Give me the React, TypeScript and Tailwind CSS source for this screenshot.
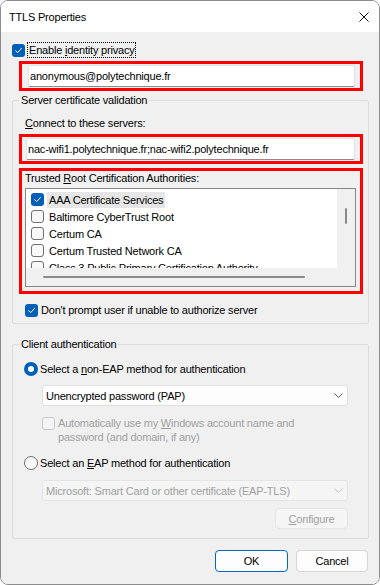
import { type ReactNode } from "react";

function CheckBox({ checked = false, disabled = false }: { checked?: boolean; disabled?: boolean }) {
  if (checked)
    return (
      <span className="flex h-[13px] w-[13px] shrink-0 items-center justify-center rounded-[3px] bg-[#005fb8]">
        <svg width="9" height="9" viewBox="0 0 9 9" fill="none">
          <path d="M1.6 4.7 L3.7 6.6 L7.5 2.4" stroke="white" strokeWidth="1" strokeLinecap="round" strokeLinejoin="round" />
        </svg>
      </span>
    );
  return (
    <span
      className={
        disabled
          ? "block h-[13px] w-[13px] shrink-0 rounded-[3px] border border-[#c8c8c8] bg-[#f5f5f5]"
          : "block h-[13px] w-[13px] shrink-0 rounded-[3px] border border-[#707070] bg-[#f8f8f8]"
      }
    />
  );
}

function Radio({ checked = false }: { checked?: boolean }) {
  return checked ? (
    <span className="flex h-[14px] w-[14px] shrink-0 items-center justify-center rounded-full bg-[#005fb8]">
      <span className="h-[6px] w-[6px] rounded-full bg-white" />
    </span>
  ) : (
    <span className="block h-[14px] w-[14px] shrink-0 rounded-full border border-[#707070] bg-[#f8f8f8]" />
  );
}

function Chevron({ color }: { color: string }) {
  return (
    <svg width="9" height="5" viewBox="0 0 9 5" fill="none">
      <path d="M0.5 0.5 L4.5 4.5 L8.5 0.5" stroke={color} strokeWidth="1" />
    </svg>
  );
}

// the red annotation frames drawn over the dialog
function RedBox({ className, children }: { className: string; children: ReactNode }) {
  return <div className={`w-[344px] border-[3px] border-[#ff0000] ${className}`}>{children}</div>;
}

const certs = [
  "AAA Certificate Services",
  "Baltimore CyberTrust Root",
  "Certum CA",
  "Certum Trusted Network CA",
  "Class 3 Public Primary Certification Authority",
];

export default function App() {
  return (
    <div className="flex h-[585px] w-[380px] flex-col overflow-hidden rounded-[8px] border border-[#8c8c8c] bg-white font-['Liberation_Sans',Arial,sans-serif] text-[11px] leading-[14px] tracking-[-0.2px] text-black">
      {/* title bar */}
      <div className="flex h-[31px] shrink-0 items-center justify-between bg-white pl-[8px] pr-[10px]">
        <span>TTLS Properties</span>
        <svg width="10" height="10" viewBox="0 0 10 10">
          <path d="M0.5 0.5 L9.5 9.5 M9.5 0.5 L0.5 9.5" stroke="#111" strokeWidth="1" />
        </svg>
      </div>

      <div className="flex flex-1 flex-col bg-[#f0f0f0]">
        <div className="ml-[11px] mt-[10px] flex h-[16px] items-center gap-[2px]">
          <CheckBox checked />
          <span className="border border-dotted border-black px-[1px] leading-[14px]">
            Enable <u>i</u>dentity privacy
          </span>
        </div>

        <RedBox className="ml-[18px] mt-[3px] h-[30px] pl-[6px] pt-[1px]">
          <div className="flex h-[22px] w-[327px] items-center rounded-[2px] border border-[#e2e2e2] border-b-[#8d8d8d] bg-white pl-[1px]">
            anonymous@polytechnique.fr
          </div>
        </RedBox>

        <fieldset className="ml-[11px] mt-[2px] w-[357px] rounded-[2px] border border-[#dcdcdc]">
          <legend className="ml-[6px] px-[2px] leading-[14px]">Server certificate validation</legend>
          <div className="ml-[12px] mt-[9px]">
            <u>C</u>onnect to these servers:
          </div>
          <RedBox className="ml-[6px] mt-[4px] h-[30px] pl-[4px] pt-[1px]">
            <div className="flex h-[22px] w-[329px] items-center rounded-[2px] border border-[#e2e2e2] border-b-[#8d8d8d] bg-white pl-[1px]">
              nac-wifi1.polytechnique.fr;nac-wifi2.polytechnique.fr
            </div>
          </RedBox>
          <RedBox className="ml-[6px] mt-[4px] h-[126px] pl-[3px]">
            <div>
              Trusted <u>R</u>oot Certification Authorities:
            </div>
            <div className="mt-[3px] grid h-[99px] w-[331px] grid-cols-[311px_18px] grid-rows-[79px_18px] border border-[#868686] bg-white">
              <div className="overflow-hidden pt-[2px]">
                {certs.map((c, i) => (
                  <div key={c} className="flex h-[17px] items-center whitespace-nowrap pl-[5px]">
                    <CheckBox checked={i === 0} />
                    <span className={i === 0 ? "ml-[3px] h-[16px] bg-[#e6e6e6] px-[2px] leading-[16px]" : "ml-[3px] h-[16px] px-[2px] leading-[16px]"}>
                      {c}
                    </span>
                  </div>
                ))}
              </div>
              <div className="flex justify-center bg-[#f0f0f0] pt-[19px]">
                <span className="h-[16px] w-[2px] rounded-full bg-[#8a8a8a]" />
              </div>
              <div className="flex items-center bg-[#f0f0f0] pl-[17px]">
                <span className="h-[2px] w-[262px] rounded-full bg-[#8a8a8a]" />
              </div>
              <div className="bg-[#f0f0f0]" />
            </div>
          </RedBox>
          <div className="mb-[5px] ml-[12px] mt-[8px] flex h-[16px] items-center gap-[3px]">
            <CheckBox checked />
            <span>Don't prompt user if unable to authorize server</span>
          </div>
        </fieldset>

        <fieldset className="ml-[11px] mt-[13px] w-[357px] rounded-[2px] border border-[#dcdcdc]">
          <legend className="ml-[6px] px-[2px] leading-[14px]">Client authentication</legend>
          <div className="ml-[11px] mt-[10px] flex h-[16px] items-center gap-[2px]">
            <Radio checked />
            <span>
              Select a <u>n</u>on-EAP method for authentication
            </span>
          </div>
          <div className="ml-[29px] mt-[8px] flex h-[21px] w-[306px] items-center justify-between rounded-[3px] border border-[#e0e0e0] bg-[#fdfdfd] pl-[3px] pr-[4px]">
            <span>Unencrypted password (PAP)</span>
            <Chevron color="#5c5c5c" />
          </div>
          <div className="ml-[29px] mt-[10px] flex items-start gap-[3px] text-[#a0a0a0]">
            <span className="mt-[1px]">
              <CheckBox disabled />
            </span>
            <span>
              Automatically use my <u>W</u>indows account name and
              <br />
              password (and domain, if any)
            </span>
          </div>
          <div className="ml-[11px] mt-[11px] flex h-[16px] items-center gap-[2px]">
            <Radio />
            <span>
              Select an <u>E</u>AP method for authentication
            </span>
          </div>
          <div className="ml-[29px] mt-[9px] flex h-[21px] w-[306px] items-center justify-between rounded-[3px] border border-[#e5e5e5] bg-[#f5f5f5] pl-[3px] pr-[4px] text-[#a0a0a0]">
            <span>Microsoft: Smart Card or other certificate (EAP-TLS)</span>
            <Chevron color="#c4c4c4" />
          </div>
          <div className="mb-[9px] ml-[262px] mt-[7px] flex h-[21px] w-[73px] items-center justify-center rounded-[4px] border border-[#e5e5e5] bg-[#f5f5f5] text-[#a0a0a0]">
            <span>
              <u>C</u>onfigure
            </span>
          </div>
        </fieldset>

        <div className="mt-[11px] flex justify-end gap-[8px] pr-[11px]">
          <button className="h-[22px] w-[73px] rounded-[4px] border border-[#0067c0] bg-[#fdfdfd]">OK</button>
          <button className="h-[22px] w-[72px] rounded-[4px] border border-[#d4d4d4] bg-[#fdfdfd]">Cancel</button>
        </div>
      </div>
    </div>
  );
}
